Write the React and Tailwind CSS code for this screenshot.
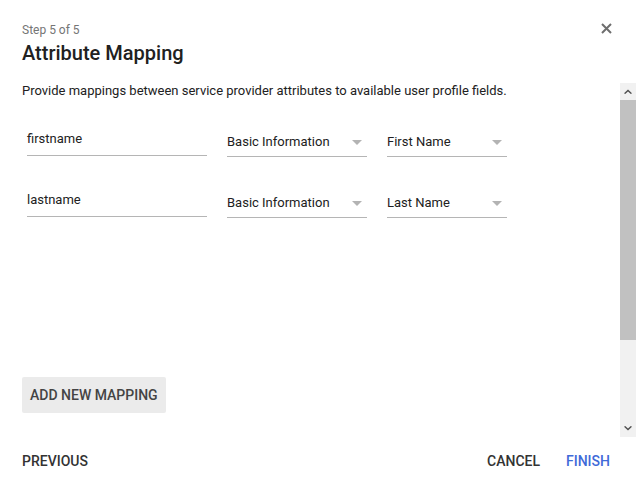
import React from "react";

function Caret() {
  return (
    <svg width="10" height="5" viewBox="0 0 10 5" className="shrink-0">
      <path d="M0 0 L10 0 L5 5 Z" fill="#b3b3b3" />
    </svg>
  );
}

function TextField({ value }) {
  return (
    <div className="w-[180px] border-b border-[#b5b5b5] pb-[7px]">
      <div className="text-[13px] leading-[18px] text-[#212121]">{value}</div>
    </div>
  );
}

function SelectField({ value, width }) {
  return (
    <div className={`${width} mt-[3px] border-b border-[#b5b5b5] pb-[5px] flex items-center justify-between pr-[5px]`}>
      <div className="text-[13px] leading-[18px] text-[#212121]">{value}</div>
      <Caret />
    </div>
  );
}

function Row({ input, group, field }) {
  return (
    <div className="flex items-start gap-5 pl-[5px]">
      <TextField value={input} />
      <SelectField value={group} width="w-[140px]" />
      <SelectField value={field} width="w-[120px]" />
    </div>
  );
}

function Scrollbar() {
  return (
    <div className="w-[16px] bg-[#f1f1f1] flex flex-col shrink-0">
      <div className="h-[17px] flex items-center justify-center">
        <svg width="8" height="5" viewBox="0 0 8 5">
          <path d="M0 4.2 L4 0.5 L8 4.2 L6.8 5 L4 2.4 L1.2 5 Z" fill="#505050" />
        </svg>
      </div>
      <div className="h-[240px] bg-[#c1c1c1]" />
      <div className="flex-1" />
      <div className="h-[17px] flex items-center justify-center">
        <svg width="8" height="5" viewBox="0 0 8 5">
          <path d="M0 0.8 L4 4.5 L8 0.8 L6.8 0 L4 2.6 L1.2 0 Z" fill="#505050" />
        </svg>
      </div>
    </div>
  );
}

export default function App() {
  return (
    <div
      className="w-[636px] h-[492px] bg-white flex flex-col overflow-hidden"
      style={{ fontFamily: "Roboto, 'Noto Sans', sans-serif" }}
    >
      <div className="flex items-start justify-between pl-[22px] pr-[24px] pt-[22px] h-[83px]">
        <div className="flex flex-col">
          <div className="text-[12px] leading-[16px] text-[#757575]">Step 5 of 5</div>
          <div className="mt-[1px] text-[20px] leading-[28px] font-medium text-[#212121]">
            Attribute Mapping
          </div>
        </div>
        <svg width="11" height="11" viewBox="0 0 11 11" className="mt-[1px]">
          <path d="M1 1 L10 10 M10 1 L1 10" stroke="#6e6e6e" strokeWidth="2" />
        </svg>
      </div>

      <div className="flex h-[354px]">
        <div className="flex-1 flex flex-col pl-[22px] pb-6">
          <div className="text-[13px] leading-[16px] text-[#212121]">
            Provide mappings between service provider attributes to available user profile fields.
          </div>
          <div className="mt-[31px] flex flex-col gap-[34px]">
            <Row input="firstname" group="Basic Information" field="First Name" />
            <Row input="lastname" group="Basic Information" field="Last Name" />
          </div>
          <div className="flex-1" />
          <div className="self-start h-9 px-2 flex items-center bg-[#ebebeb] rounded-[2px] text-[14px] font-medium text-[#444444]">
            ADD NEW MAPPING
          </div>
        </div>
        <Scrollbar />
      </div>

      <div className="flex items-center justify-between pl-[22px] pr-[26px] pt-[6px]">
        <div className="h-9 flex items-center text-[14px] font-medium text-[#333333]">PREVIOUS</div>
        <div className="flex items-center gap-[26px]">
          <div className="h-9 flex items-center text-[14px] font-medium text-[#333333]">CANCEL</div>
          <div className="h-9 flex items-center text-[14px] font-medium text-[#3f6ad8]">FINISH</div>
        </div>
      </div>
    </div>
  );
}
